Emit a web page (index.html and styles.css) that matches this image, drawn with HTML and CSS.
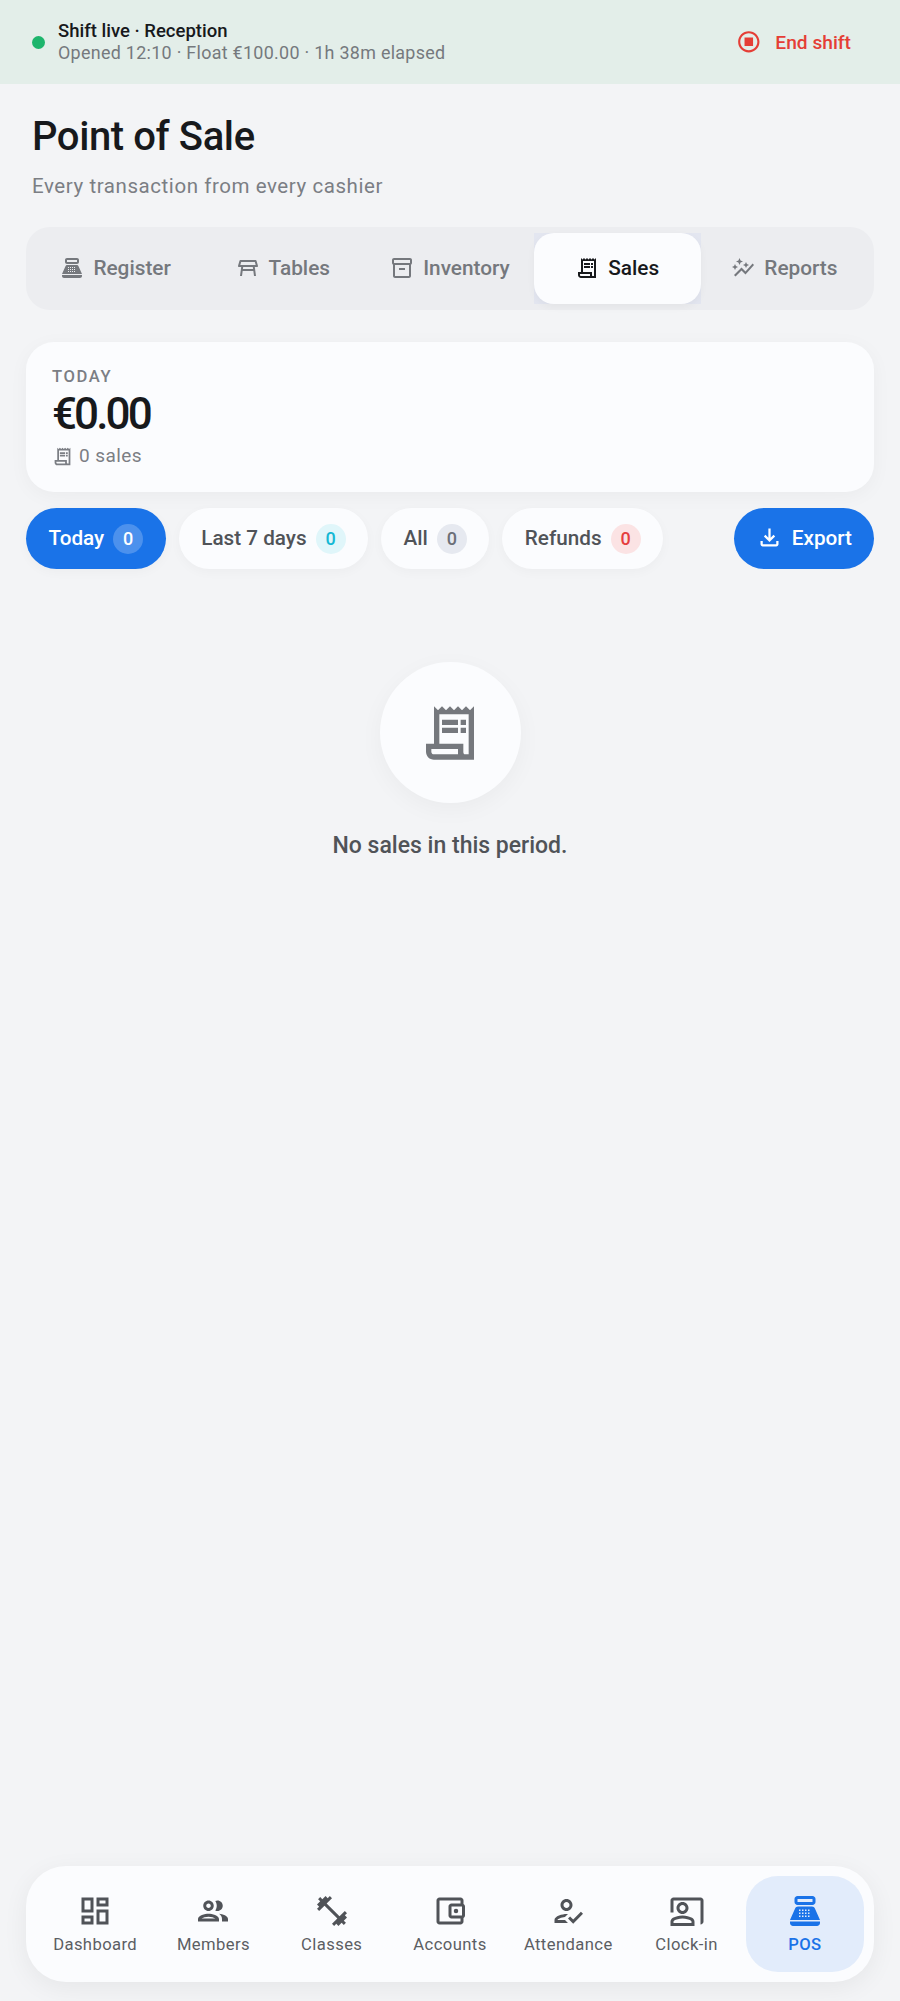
FILE: index.html
```html
<!DOCTYPE html>
<html lang="en">
<head>
  <meta charset="UTF-8">
  <title>Point of Sale</title>
  <link rel="stylesheet" href="styles.css">
</head>
<body>
  <!-- shift banner -->
  <header class="shift">
    <span class="shift-dot"></span>
    <div class="shift-text">
      <div class="shift-title">Shift live · Reception</div>
      <div class="shift-sub">Opened 12:10 · Float €100.00 · 1h 38m elapsed</div>
    </div>
    <button class="end-shift">
      <svg class="icon-end" viewBox="0 0 24 24"><path d="M12 2C6.48 2 2 6.48 2 12s4.48 10 10 10 10-4.48 10-10S17.52 2 12 2zm0 18c-4.41 0-8-3.59-8-8s3.59-8 8-8 8 3.59 8 8-3.59 8-8 8zm4-12H8v8h8V8z"/></svg>
      End shift
    </button>
  </header>

  <main class="main">
    <h1 class="title">Point of Sale</h1>
    <p class="subtitle">Every transaction from every cashier</p>

    <!-- tabs -->
    <nav class="tabs">
      <div class="tab">
        <svg class="icon-tab" viewBox="0 0 24 24"><path fill-rule="evenodd" d="M7 2h10c1.1 0 2 .9 2 2v2c0 1.1-.9 2-2 2H7c-1.1 0-2-.9-2-2V4c0-1.1.9-2 2-2zm0 2v2h10V4H7zM7.3 9h9.4c.8 0 1.5.47 1.83 1.19L22 18H2l3.47-7.81C5.79 9.47 6.5 9 7.3 9zM8 11v1h1v-1H8zm2 0v1h1v-1h-1zm2 0v1h1v-1h-1zm2 0v1h1v-1h-1zM8 13v1h1v-1H8zm2 0v1h1v-1h-1zm2 0v1h1v-1h-1zm2 0v1h1v-1h-1zM8 15v1h1v-1H8zm2 0v1h1v-1h-1zm2 0v1h1v-1h-1zm2 0v1h1v-1h-1zM2 19h20v1c0 1.1-.9 2-2 2H4c-1.1 0-2-.9-2-2v-1z"/></svg>
        Register
      </div>
      <div class="tab">
        <svg class="icon-tab" viewBox="0 0 24 24"><path d="M21.96 9.73l-1.43-5C20.41 4.3 20.02 4 19.57 4H4.43c-.45 0-.84.3-.96.73l-1.43 5C1.86 10.36 2.34 11 3 11h2.2L4 20h2l.67-5h10.67l.66 5h2l-1.2-9H21c.66 0 1.14-.64.96-1.27zM6.93 13l.27-2h9.6l.27 2H6.93zm-2.6-4l.86-3h13.63l.86 3H4.33z"/></svg>
        Tables
      </div>
      <div class="tab">
        <svg class="icon-tab" viewBox="0 0 24 24"><path d="M20 2H4c-1 0-2 .9-2 2v3.01c0 .72.43 1.34 1 1.69V20c0 1.1 1.1 2 2 2h14c.9 0 2-.9 2-2V8.7c.57-.35 1-.97 1-1.69V4c0-1.1-1-2-2-2zm-1 18H5V9h14v11zm1-13H4V4h16v3zM9 12h6v2H9z"/></svg>
        Inventory
      </div>
      <div class="tab tab-active">
        <div class="tab-face">
          <svg class="icon-tab" viewBox="0 0 24 24"><path fill-rule="evenodd" d="M6 2l1.5 1.5L9 2l1.5 1.5L12 2l1.5 1.5L15 2l1.5 1.5L18 2l1.5 1.5L21 2v20H6c-1.66 0-3-1.34-3-3v-3h3V2zm2 3v11h9v3c0 .55.2 1 .7 1H19V5H8zM5 18v1c0 .55.45 1 1 1h9v-2H5zM9 7h6v2H9V7zm7 0h2v2h-2V7zm-7 3h6v2H9v-2zm7 0h2v2h-2v-2z"/></svg>
          Sales
        </div>
      </div>
      <div class="tab">
        <svg class="icon-tab" viewBox="0 0 24 24"><path d="M14.06 9.94 12 9l2.06-.94L15 6l.94 2.06L18 9l-2.06.94L15 12zM4 14l.94-2.06L7 11l-2.06-.94L4 8l-.94 2.06L1 11l2.06.94zm4.5-5 1.09-2.41L12 5.5 9.59 4.41 8.5 2 7.41 4.41 5 5.5l2.41 1.09zm-4 11.5 6-6.01 4 4L23 8.93l-1.41-1.41-7.09 7.97-4-4L3 19z"/></svg>
        Reports
      </div>
    </nav>

    <!-- today total -->
    <section class="summary">
      <div class="summary-label">TODAY</div>
      <div class="summary-value">€0.00</div>
      <div class="summary-count">
        <svg class="icon-small" viewBox="0 0 24 24"><path fill-rule="evenodd" d="M6 2l1.5 1.5L9 2l1.5 1.5L12 2l1.5 1.5L15 2l1.5 1.5L18 2l1.5 1.5L21 2v20H6c-1.66 0-3-1.34-3-3v-3h3V2zm2 3v11h9v3c0 .55.2 1 .7 1H19V5H8zM5 18v1c0 .55.45 1 1 1h9v-2H5zM9 7h6v2H9V7zm7 0h2v2h-2V7zm-7 3h6v2H9v-2zm7 0h2v2h-2v-2z"/></svg>
        0 sales
      </div>
    </section>

    <!-- filters -->
    <div class="filters">
      <div class="chip chip-active">Today <span class="badge badge-active">0</span></div>
      <div class="chip">Last 7 days <span class="badge badge-cyan">0</span></div>
      <div class="chip">All <span class="badge badge-grey">0</span></div>
      <div class="chip">Refunds <span class="badge badge-red">0</span></div>
      <button class="export">
        <svg class="icon-export" viewBox="0 0 24 24"><path d="M18 15v3H6v-3H4v3c0 1.1.9 2 2 2h12c1.1 0 2-.9 2-2v-3h-2zm-1-4l-1.41-1.41L13 12.17V4h-2v8.17L8.41 9.59 7 11l5 5 5-5z"/></svg>
        Export
      </button>
    </div>

    <!-- empty state -->
    <div class="empty">
      <div class="empty-circle">
        <svg class="icon-empty" viewBox="0 0 24 24"><path fill-rule="evenodd" d="M6 2l1.5 1.5L9 2l1.5 1.5L12 2l1.5 1.5L15 2l1.5 1.5L18 2l1.5 1.5L21 2v20H6c-1.66 0-3-1.34-3-3v-3h3V2zm2 3v11h9v3c0 .55.2 1 .7 1H19V5H8zM5 18v1c0 .55.45 1 1 1h9v-2H5zM9 7h6v2H9V7zm7 0h2v2h-2V7zm-7 3h6v2H9v-2zm7 0h2v2h-2v-2z"/></svg>
      </div>
      <p class="empty-text">No sales in this period.</p>
    </div>
  </main>

  <!-- bottom nav -->
  <nav class="bottom">
    <div class="bottom-item">
      <svg class="icon-nav" viewBox="0 0 24 24"><path d="M19 5v2h-4V5h4M9 5v6H5V5h4m10 8v6h-4v-6h4M9 17v2H5v-2h4M21 3h-8v6h8V3zM11 3H3v10h8V3zm10 8h-8v10h8V11zm-10 4H3v6h8v-6z"/></svg>
      Dashboard
    </div>
    <div class="bottom-item">
      <svg class="icon-nav" viewBox="0 0 24 24"><path d="M9 13.75c-2.34 0-7 1.17-7 3.5V19h14v-1.75c0-2.33-4.66-3.5-7-3.5zM4.34 17c.84-.58 2.87-1.25 4.66-1.25s3.82.67 4.66 1.25H4.34zM9 12c1.93 0 3.5-1.57 3.5-3.5S10.93 5 9 5 5.5 6.57 5.5 8.5 7.07 12 9 12zm0-5c.83 0 1.5.67 1.5 1.5S9.83 10 9 10s-1.5-.67-1.5-1.5S8.17 7 9 7zm7.04 6.81c1.16.84 1.96 1.96 1.96 3.44V19h4v-1.75c0-2.02-3.5-3.17-5.96-3.44zM15 12c1.93 0 3.5-1.57 3.5-3.5S16.93 5 15 5c-.54 0-1.04.13-1.5.35.63.89 1 1.98 1 3.15s-.37 2.26-1 3.15c.46.22.96.35 1.5.35z"/></svg>
      Members
    </div>
    <div class="bottom-item">
      <svg class="icon-nav" viewBox="0 0 24 24"><path d="M20.57 14.86L22 13.43 20.57 12 17 15.57 8.43 7 12 3.43 10.57 2 9.14 3.43 7.71 2 5.57 4.14 4.14 2.71 2.71 4.14l1.43 1.43L2 7.71l1.43 1.43L2 10.57 3.43 12 7 8.43 15.57 17 12 20.57 13.43 22l1.43-1.43L16.29 22l2.14-2.14 1.43 1.43 1.43-1.43-1.43-1.43L22 16.29z"/></svg>
      Classes
    </div>
    <div class="bottom-item">
      <svg class="icon-nav" viewBox="0 0 24 24"><path d="M21 7.28V5c0-1.1-.9-2-2-2H5c-1.11 0-2 .9-2 2v14c0 1.1.89 2 2 2h14c1.1 0 2-.9 2-2v-2.28c.59-.35 1-.98 1-1.72V9c0-.74-.41-1.38-1-1.72zM20 9v6h-7V9h7zM5 19V5h14v2h-6c-1.1 0-2 .9-2 2v6c0 1.1.9 2 2 2h6v2H5z"/><circle cx="16" cy="12" r="1.5"/></svg>
      Accounts
    </div>
    <div class="bottom-item">
      <svg class="icon-nav" viewBox="0 0 24 24"><path d="M11 12c2.21 0 4-1.79 4-4s-1.79-4-4-4-4 1.79-4 4 1.79 4 4 4zm0-6c1.1 0 2 .9 2 2s-.9 2-2 2-2-.9-2-2 .9-2 2-2zM5 18c.2-.63 2.57-1.68 4.96-1.94l2.04-2c-.39-.04-.68-.06-1-.06-2.67 0-8 1.34-8 4v2h9l-2-2H5zm15.6-5.5l-5.13 5.17-2.07-2.08L12 17l3.47 3.5L22 13.91z"/></svg>
      Attendance
    </div>
    <div class="bottom-item">
      <svg class="icon-nav" viewBox="0 0 24 24"><path d="M21 3H3c-1.1 0-2 .9-2 2v8h2V5h18v16c1.1 0 2-.9 2-2V5c0-1.1-.9-2-2-2zM13 10c0-2.21-1.79-4-4-4S5 7.79 5 10s1.79 4 4 4 4-1.79 4-4zm-6 0c0-1.1.9-2 2-2s2 .9 2 2-.9 2-2 2-2-.9-2-2zM15.39 16.56C13.71 15.7 11.53 15 9 15s-4.71.7-6.39 1.56C1.61 17.07 1 18.1 1 19.22V22h16v-2.78c0-1.12-.61-2.15-1.61-2.66zM15 20H3v-.78c0-.38.2-.72.52-.88C4.71 17.73 6.63 17 9 17c2.37 0 4.29.73 5.48 1.34.32.16.52.5.52.88V20z"/></svg>
      Clock-in
    </div>
    <div class="bottom-item bottom-active">
      <svg class="icon-nav" viewBox="0 0 24 24"><path fill-rule="evenodd" d="M7 2h10c1.1 0 2 .9 2 2v2c0 1.1-.9 2-2 2H7c-1.1 0-2-.9-2-2V4c0-1.1.9-2 2-2zm0 2v2h10V4H7zM7.3 9h9.4c.8 0 1.5.47 1.83 1.19L22 18H2l3.47-7.81C5.79 9.47 6.5 9 7.3 9zM8 11v1h1v-1H8zm2 0v1h1v-1h-1zm2 0v1h1v-1h-1zm2 0v1h1v-1h-1zM8 13v1h1v-1H8zm2 0v1h1v-1h-1zm2 0v1h1v-1h-1zm2 0v1h1v-1h-1zM8 15v1h1v-1H8zm2 0v1h1v-1h-1zm2 0v1h1v-1h-1zm2 0v1h1v-1h-1zM2 19h20v1c0 1.1-.9 2-2 2H4c-1.1 0-2-.9-2-2v-1z"/></svg>
      POS
    </div>
  </nav>
</body>
</html>
```

FILE: styles.css
```css
* {
  box-sizing: border-box;
}
body {
  margin: 0;
  height: 2001px;
  display: flex;
  flex-direction: column;
  font-family: Roboto, "Noto Sans", sans-serif;
  background-color: #f3f4f6;
  color: #17191c;
}
svg {
  fill: currentColor;
  flex: none;
  display: block;
}
button {
  font-family: inherit;
  border: 0;
  cursor: pointer;
}

/* shift banner */
.shift {
  height: 84px;
  display: flex;
  align-items: center;
  padding: 0 49px 0 32px;
  background-color: #e3eee9;
}
.shift-dot {
  width: 13px;
  height: 13px;
  border-radius: 50%;
  background-color: #1db56c;
  margin-right: 13px;
}
.shift-text {
  flex: 1;
}
.shift-title {
  font-size: 18.5px;
  font-weight: 500;
  line-height: 21px;
}
.shift-sub {
  font-size: 17.9px;
  letter-spacing: 0.3px;
  line-height: 21px;
  color: #75797d;
}
.end-shift {
  display: flex;
  align-items: center;
  gap: 13.5px;
  background: none;
  padding: 0;
  font-size: 19.2px;
  font-weight: 500;
  color: #e53e36;
}
.icon-end {
  width: 25.6px;
  height: 25.6px;
}

/* main */
.main {
  flex: 1;
  padding: 0 26px;
}
.title {
  margin: 27px 0 0 6px;
  font-size: 40px;
  font-weight: 500;
  line-height: 52px;
  letter-spacing: -0.4px;
}
.subtitle {
  margin: 10px 0 0 6px;
  font-size: 20.5px;
  line-height: 26px;
  letter-spacing: 0.57px;
  color: #7b7e84;
}

/* tabs */
.tabs {
  display: flex;
  height: 83px;
  margin-top: 28px;
  padding: 6px;
  border-radius: 24px;
  background-color: #ecedf0;
}
.tab {
  flex: 1;
  display: flex;
  align-items: center;
  justify-content: center;
  gap: 9px;
  padding-bottom: 2px;
  font-size: 20.8px;
  font-weight: 500;
  color: #75787d;
}
.tab-active {
  background-color: #e3e6f0;
  align-items: stretch;
  padding-bottom: 0;
}
.tab-face {
  flex: 1;
  display: flex;
  align-items: center;
  justify-content: center;
  gap: 9px;
  padding-bottom: 2px;
  border-radius: 20px;
  background-color: #fbfcfe;
  box-shadow: 0 3px 8px rgba(0, 0, 0, 0.04);
  color: #17191c;
}
.icon-tab {
  width: 24px;
  height: 24px;
}

/* summary card */
.summary {
  height: 150px;
  margin-top: 32px;
  padding: 25px 26px 0;
  border-radius: 28px;
  background-color: #fbfcfe;
  box-shadow: 0 4px 20px rgba(0, 0, 0, 0.04);
}
.summary-label {
  font-size: 16.6px;
  font-weight: 500;
  letter-spacing: 1.6px;
  line-height: 20px;
  color: #7b7e84;
}
.summary-value {
  font-size: 44px;
  font-weight: 500;
  line-height: 54px;
  letter-spacing: -2.9px;
}
.summary-count {
  display: flex;
  align-items: center;
  gap: 6px;
  font-size: 19px;
  letter-spacing: 0.4px;
  line-height: 30px;
  color: #7b7e84;
}
.icon-small {
  width: 21px;
  height: 21px;
}

/* filters */
.filters {
  display: flex;
  align-items: center;
  gap: 13px;
  margin-top: 16px;
}
.chip {
  height: 61px;
  display: flex;
  align-items: center;
  gap: 9px;
  padding: 0 22.5px 2px;
  border-radius: 31px;
  background-color: #fbfcfe;
  box-shadow: 0 3px 12px rgba(0, 0, 0, 0.03);
  font-size: 20.7px;
  font-weight: 500;
  color: #505358;
}
.chip-active {
  background-color: #1a73e8;
  color: #fff;
}
.badge {
  width: 30px;
  height: 30px;
  margin-top: 2px;
  border-radius: 50%;
  display: flex;
  align-items: center;
  justify-content: center;
  font-size: 18px;
}
.badge-active {
  background-color: rgba(255, 255, 255, 0.22);
}
.badge-cyan {
  background-color: #e0f6fa;
  color: #14b8d4;
}
.badge-grey {
  background-color: #e6e9f0;
  color: #6b6f78;
}
.badge-red {
  background-color: #fbe3e4;
  color: #e53e3e;
}
.export {
  margin-left: auto;
  height: 61px;
  display: flex;
  align-items: center;
  gap: 9px;
  padding: 0 22px 2px 21.5px;
  border-radius: 31px;
  background-color: #1a73e8;
  color: #fff;
  font-size: 20.7px;
  font-weight: 500;
}
.icon-export {
  width: 27px;
  height: 27px;
}

/* empty state */
.empty {
  display: flex;
  flex-direction: column;
  align-items: center;
  margin-top: 93px;
}
.empty-circle {
  width: 141px;
  height: 141px;
  border-radius: 50%;
  display: flex;
  align-items: center;
  justify-content: center;
  background-color: #fbfcfe;
  box-shadow: 0 6px 24px rgba(0, 0, 0, 0.04);
  color: #75787d;
}
.icon-empty {
  width: 64px;
  height: 64px;
}
.empty-text {
  margin: 28px 0 0;
  font-size: 23px;
  font-weight: 500;
  line-height: 30px;
  color: #505358;
}

/* bottom nav */
.bottom {
  display: flex;
  height: 116px;
  margin: 0 26px 19px;
  padding: 10px;
  border-radius: 40px;
  background-color: #fbfcfe;
  box-shadow: 0 6px 26px rgba(0, 0, 0, 0.06);
}
.bottom-item {
  flex: 1;
  display: flex;
  flex-direction: column;
  align-items: center;
  justify-content: center;
  gap: 6px;
  padding-bottom: 2px;
  font-size: 16.64px;
  letter-spacing: 0.4px;
  color: #5b5e63;
}
.icon-nav {
  width: 36px;
  height: 36px;
  color: #505358;
}
.bottom-active {
  border-radius: 32px;
  background-color: #e2ecfb;
  color: #1a73e8;
  font-weight: 500;
}
.bottom-active .icon-nav {
  color: #1a73e8;
}
```
